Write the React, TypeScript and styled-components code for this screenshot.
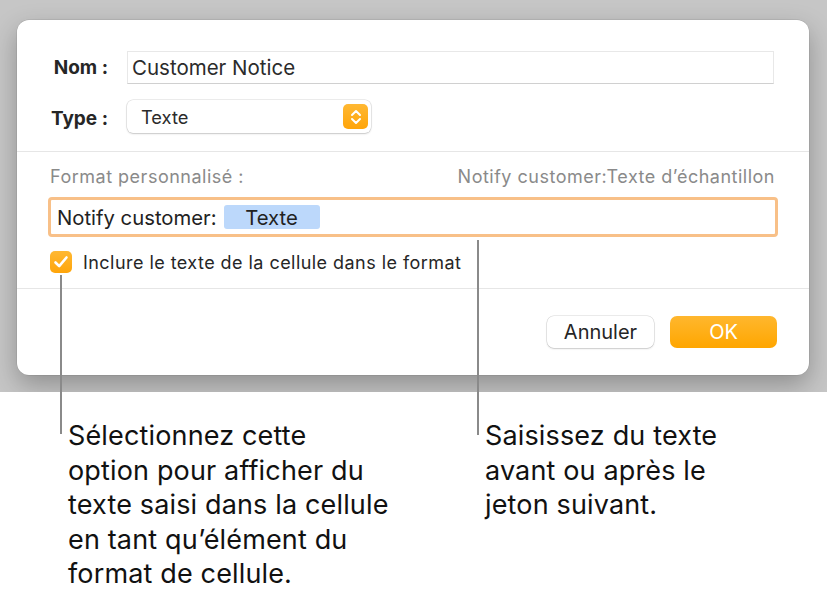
import styled, { createGlobalStyle } from "styled-components";

const GlobalStyle = createGlobalStyle`
  html, body {
    margin: 0;
    padding: 0;
    background: #ffffff;
  }
  body {
    font-family: Inter, "Liberation Sans", Arial, sans-serif;
    -webkit-font-smoothing: antialiased;
  }
`;

const Page = styled.div`
  position: relative;
  width: 827px;
  height: 591px;
  overflow: hidden;
  background: #fff;
`;

const Desk = styled.div`
  height: 392px;
  box-sizing: border-box;
  padding: 20px 18px 0 17px;
  background: #c6c6c6;
  overflow: hidden;
`;

const Dialog = styled.div`
  height: 355px;
  background: #fff;
  border-radius: 12px;
  box-shadow: 0 10px 26px rgba(0, 0, 0, 0.28), 0 0 0 0.5px rgba(0, 0, 0, 0.12);
  display: flex;
  flex-direction: column;
`;

const TopSection = styled.div`
  display: grid;
  grid-template-columns: 74px 1fr;
  column-gap: 19px;
  row-gap: 16px;
  align-items: center;
  padding: 31px 35px 18px 17px;
  border-bottom: 1.5px solid #e6e6e6;
`;

const Label = styled.div<{ drop?: number }>`
  font-size: 19px;
  font-weight: 700;
  color: #262626;
  text-align: right;
  white-space: nowrap;
  padding-top: ${(p) => p.drop ?? 0}px;
`;

const NameField = styled.div`
  height: 33px;
  box-sizing: border-box;
  border: 1px solid #e8e8e8;
  border-bottom-color: #d0d0d0;
  display: flex;
  align-items: center;
  padding-left: 4px;
  font-size: 20.5px;
  color: #2b2b2b;
`;

const Select = styled.div`
  width: 244px;
  height: 33px;
  box-sizing: border-box;
  border-radius: 6px;
  background: #fff;
  box-shadow: 0 0 0 0.5px rgba(0, 0, 0, 0.14), 0 1px 2px rgba(0, 0, 0, 0.16);
  display: flex;
  align-items: center;
  justify-content: space-between;
  padding: 0 3px 0 14px;
  font-size: 18.3px;
  color: #2b2b2b;
`;

const Stepper = styled.div`
  width: 25px;
  height: 25px;
  border-radius: 5px;
  background: linear-gradient(#ffb833, #ffa50a);
  display: flex;
  align-items: center;
  justify-content: center;
`;

const FormatSection = styled.div`
  display: flex;
  flex-direction: column;
  padding: 14px 31px 15px 31px;
  border-bottom: 1.5px solid #e6e6e6;
`;

const FormatHead = styled.div`
  display: flex;
  justify-content: space-between;
  font-size: 18px;
  letter-spacing: 0.5px;
  color: #8a8a8a;
  padding: 0 3px 0 2px;
`;

const FormatField = styled.div`
  margin-top: 10px;
  height: 40px;
  box-sizing: border-box;
  border: 3px solid #f8c088;
  border-radius: 4px;
  display: flex;
  align-items: center;
  padding-left: 6px;
  gap: 7px;
  font-size: 20.3px;
  color: #222;
`;

const Token = styled.span`
  display: inline-flex;
  align-items: center;
  justify-content: center;
  width: 96px;
  height: 24px;
  border-radius: 3px;
  background: #bcd8fb;
  color: #222;
`;

const CheckRow = styled.div`
  display: flex;
  align-items: center;
  gap: 11px;
  margin-top: 14px;
  padding-left: 2px;
  font-size: 18px;
  letter-spacing: 0.45px;
  color: #262626;
`;

const CheckBox = styled.div`
  width: 22px;
  height: 22px;
  border-radius: 5px;
  background: linear-gradient(#ffb833, #ffa50a);
  display: flex;
  align-items: center;
  justify-content: center;
`;

const Footer = styled.div`
  flex: 1;
  display: flex;
  justify-content: flex-end;
  align-items: flex-start;
  gap: 16px;
  padding: 27px 32px 0 0;
`;

const Button = styled.div<{ primary?: boolean }>`
  width: 107px;
  height: 32px;
  box-sizing: border-box;
  border-radius: 7px;
  display: flex;
  align-items: center;
  justify-content: center;
  font-size: 20px;
  color: ${(p) => (p.primary ? "#ffffff" : "#262626")};
  background: ${(p) =>
    p.primary ? "linear-gradient(#ffb72e, #ffa600)" : "#ffffff"};
  box-shadow: ${(p) =>
    p.primary
      ? "none"
      : "0 0 0 0.5px rgba(0,0,0,0.16), 0 1px 2px rgba(0,0,0,0.14)"};
`;

const Notes = styled.div`
  display: flex;
  padding: 27px 0 0 68px;
`;

const Note = styled.p<{ width: number }>`
  margin: 0;
  width: ${(p) => p.width}px;
  font-size: 27px;
  letter-spacing: 0.15px;
  line-height: 34.5px;
  color: #111;
  white-space: nowrap;
`;

const Leader = styled.div<{ left: number; top: number; height: number }>`
  position: absolute;
  left: ${(p) => p.left}px;
  top: ${(p) => p.top}px;
  width: 2px;
  height: ${(p) => p.height}px;
  background: #8a8a8a;
`;

export default function App() {
  return (
    <Page>
      <GlobalStyle />
      <Desk>
        <Dialog>
          <TopSection>
            <Label>Nom :</Label>
            <NameField>Customer Notice</NameField>
            <Label drop={3}>Type :</Label>
            <Select>
              <span>Texte</span>
              <Stepper>
                <svg width="12" height="18" viewBox="0 0 12 18">
                  <path
                    d="M2 7 L6 3 L10 7 M2 11 L6 15 L10 11"
                    fill="none"
                    stroke="#fff"
                    strokeWidth="2"
                    strokeLinecap="round"
                    strokeLinejoin="round"
                  />
                </svg>
              </Stepper>
            </Select>
          </TopSection>
          <FormatSection>
            <FormatHead>
              <span>Format personnalisé :</span>
              <span>Notify customer:Texte d’échantillon</span>
            </FormatHead>
            <FormatField>
              <span>Notify customer:</span>
              <Token>Texte</Token>
            </FormatField>
            <CheckRow>
              <CheckBox>
                <svg width="16" height="14" viewBox="0 0 16 14">
                  <path
                    d="M2.5 7.5 L6.2 11.2 L13.5 2.5"
                    fill="none"
                    stroke="#fff"
                    strokeWidth="2.6"
                    strokeLinecap="round"
                    strokeLinejoin="round"
                  />
                </svg>
              </CheckBox>
              <span>Inclure le texte de la cellule dans le format</span>
            </CheckRow>
          </FormatSection>
          <Footer>
            <Button>Annuler</Button>
            <Button primary>OK</Button>
          </Footer>
        </Dialog>
      </Desk>
      <Notes>
        <Note width={417}>
          Sélectionnez cette
          <br />
          option pour afficher du
          <br />
          texte saisi dans la cellule
          <br />
          en tant qu’élément du
          <br />
          format de cellule.
        </Note>
        <Note width={300}>
          Saisissez du texte
          <br />
          avant ou après le
          <br />
          jeton suivant.
        </Note>
      </Notes>
      <Leader left={60} top={275} height={159} />
      <Leader left={477} top={240} height={195} />
    </Page>
  );
}
